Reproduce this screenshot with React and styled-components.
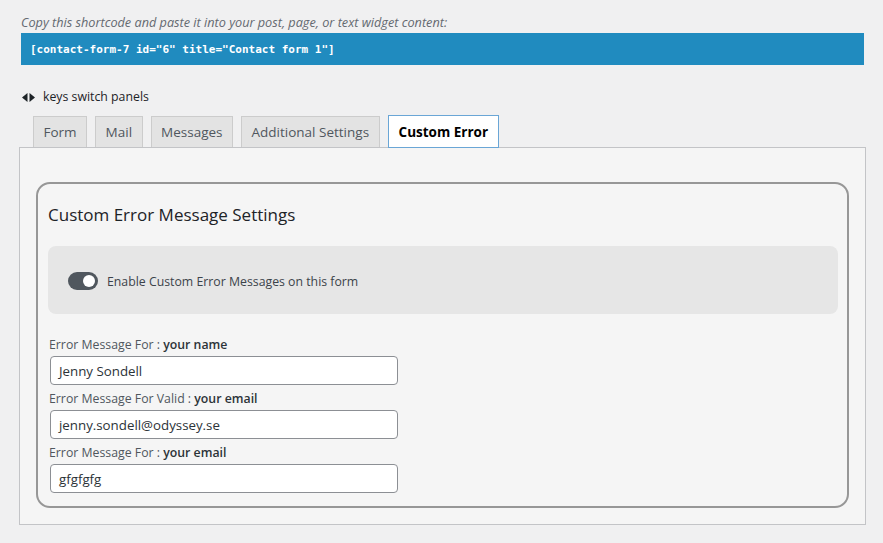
import React from "react";
import styled, { createGlobalStyle } from "styled-components";

const Global = createGlobalStyle`
  html, body { margin: 0; padding: 0; background: #f0f0f1; }
  body { font-family: "Open Sans", "Noto Sans", sans-serif; color: #3c434a; }
  * { box-sizing: border-box; }
`;

const Page = styled.div`
  width: 883px;
  height: 543px;
  padding: 13px 17px 0 19px;
  background: #f0f0f1;
  overflow: hidden;
`;

const Hint = styled.p`
  margin: 0 0 2px 2px;
  font-size: 12.7px;
  line-height: 18px;
  font-style: italic;
  color: #646970;
`;

const Shortcode = styled.div`
  margin: 0 2px;
  height: 32px;
  background: #208bbf;
  color: #fff;
  font-family: "DejaVu Sans Mono", "Liberation Mono", monospace;
  font-weight: 700;
  font-size: 11px;
  display: flex;
  align-items: center;
  padding-left: 9px;
`;

const Keys = styled.div`
  margin-top: 23px;
  margin-left: 3px;
  display: flex;
  align-items: center;
  gap: 8px;
  font-size: 12.3px;
  line-height: 18px;
  color: #1d2327;
`;

const TabList = styled.div`
  margin-top: 10px;
  padding-left: 14px;
  display: flex;
  align-items: flex-end;
  gap: 8px;
  height: 31px;
`;

const Tab = styled.div`
  position: relative;
  z-index: ${(p) => (p.$active ? 1 : 0)};
  height: ${(p) => (p.$active ? "33px" : "31px")};
  margin-bottom: ${(p) => (p.$active ? "-1px" : "0")};
  padding: 0 ${(p) => (p.$active ? "10px" : "9.5px")};
  display: flex;
  align-items: center;
  font-size: 13.5px;
  font-weight: ${(p) => (p.$active ? 700 : 400)};
  color: ${(p) => (p.$active ? "#000" : "#50575e")};
  background: ${(p) => (p.$active ? "#fff" : "#e3e3e3")};
  border: 1px solid ${(p) => (p.$active ? "#6aa6d6" : "#cccccc")};
  border-bottom: ${(p) => (p.$active ? "1px solid #6aa6d6" : "none")};
`;

const Panel = styled.div`
  width: 847px;
  border: 1px solid #c3c4c7;
  background: #f5f5f5;
  padding: 34px 16px 16px 16px;
`;

const Card = styled.div`
  border: 2px solid #979797;
  border-radius: 14px;
  padding: 0 9px 13px 10px;
`;

const Heading = styled.h2`
  margin: 19px 0 19px;
  font-size: 17px;
  line-height: 24px;
  font-weight: 400;
  color: #1d2327;
`;

const ToggleBox = styled.div`
  height: 68px;
  background: #e6e6e6;
  border-radius: 8px;
  display: flex;
  align-items: center;
  gap: 9px;
  padding: 2px 0 0 20px;
  font-size: 12.3px;
  color: #3c434a;
`;

const Switch = styled.span`
  width: 30px;
  height: 18px;
  border-radius: 9px;
  background: #50575e;
  display: flex;
  align-items: center;
  justify-content: flex-end;
  padding-right: 3px;
  &::after {
    content: "";
    width: 12px;
    height: 12px;
    border-radius: 50%;
    background: #fff;
  }
`;

const Fields = styled.div`
  margin-top: 21px;
`;

const Label = styled.div`
  margin: 4px 0 2px 1px;
  font-size: 12.3px;
  line-height: 19px;
  color: #50575e;
  b { font-weight: 600; color: #2c3338; }
`;

const Input = styled.div`
  width: 348px;
  height: 29px;
  margin-left: 2px;
  border: 1px solid #8c8f94;
  border-radius: 4px;
  background: #fff;
  padding-left: 8px;
  display: flex;
  align-items: center;
  font-size: 13.3px;
  color: #2c3338;
`;

const fields = [
  { pre: "Error Message For : ", name: "your name", value: "Jenny Sondell" },
  { pre: "Error Message For Valid : ", name: "your email", value: "jenny.sondell@odyssey.se" },
  { pre: "Error Message For : ", name: "your email", value: "gfgfgfg" },
];

const tabs = ["Form", "Mail", "Messages", "Additional Settings", "Custom Error"];

export default function App() {
  return (
    <Page>
      <Global />
      <Hint>Copy this shortcode and paste it into your post, page, or text widget content:</Hint>
      <Shortcode>[contact-form-7 id="6" title="Contact form 1"]</Shortcode>
      <Keys>
        <svg width="13" height="9" viewBox="0 0 13 9">
          <polygon points="0,4.5 5.5,0 5.5,9" fill="#1d2327" />
          <polygon points="13,4.5 7.5,0 7.5,9" fill="#1d2327" />
        </svg>
        <span>keys switch panels</span>
      </Keys>
      <TabList>
        {tabs.map((t) => (
          <Tab key={t} $active={t === "Custom Error"}>{t}</Tab>
        ))}
      </TabList>
      <Panel>
        <Card>
          <Heading>Custom Error Message Settings</Heading>
          <ToggleBox>
            <Switch />
            <span>Enable Custom Error Messages on this form</span>
          </ToggleBox>
          <Fields>
            {fields.map((f, i) => (
              <React.Fragment key={i}>
                <Label>
                  {f.pre}
                  <b>{f.name}</b>
                </Label>
                <Input>{f.value}</Input>
              </React.Fragment>
            ))}
          </Fields>
        </Card>
      </Panel>
    </Page>
  );
}
